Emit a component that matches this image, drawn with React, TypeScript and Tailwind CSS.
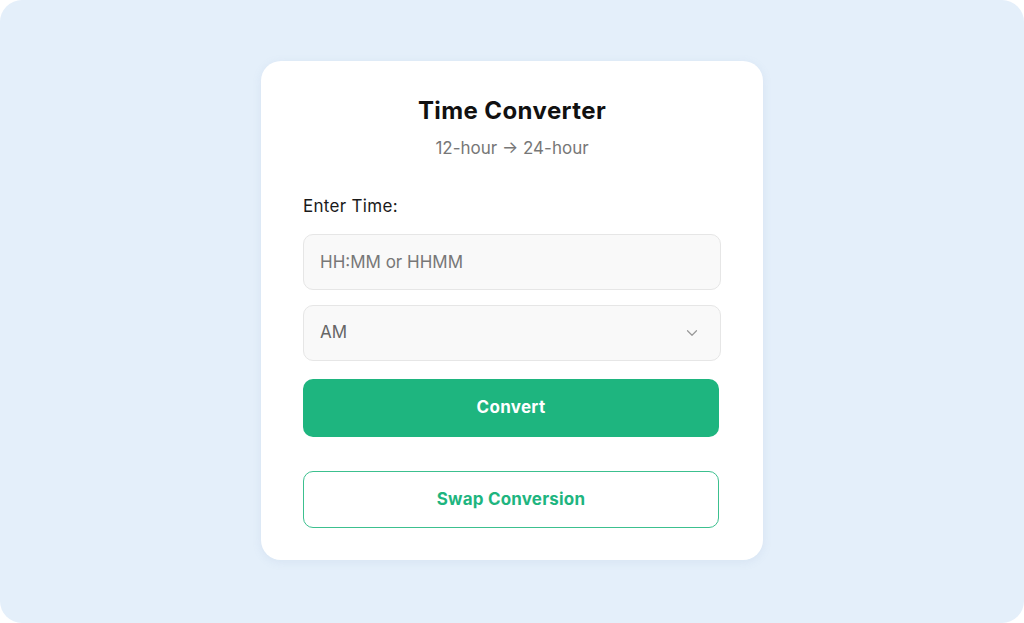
import { ChevronDown } from 'lucide-react';

export default function App() {
  return (
    <div className="w-[1024px] h-[623px] bg-white">
      <div className="w-full h-full rounded-[22px] bg-[#e4effa] flex items-start justify-center pt-[61px] font-['Inter',sans-serif]">
        <div className="w-[502px] h-[499px] bg-white rounded-[20px] shadow-[0_2px_10px_rgba(120,150,190,0.12)] px-[42px] pt-[34px]">
          {/* Header */}
          <div className="text-center">
            <h1 className="text-[24px] font-bold text-[#111] leading-[32px] tracking-[0.4px]">Time Converter</h1>
            <p className="mt-[9px] text-[17px] text-[#777] leading-[24px]">12-hour → 24-hour</p>
          </div>

          <label className="block mt-[35px] text-[17px] text-[#1a1a1a] leading-[22px] tracking-[0.3px]">Enter Time:</label>

          <input
            type="text"
            placeholder="HH:MM or HHMM"
            className="mt-[17px] w-[418px] h-[56px] rounded-[10px] border border-[#e6e6e6] bg-[#f9f9f9] px-[16px] text-[17px] placeholder:text-[#777] outline-none"
          />

          <div className="relative mt-[15px] w-[418px] h-[56px] rounded-[10px] border border-[#e6e6e6] bg-[#f9f9f9] px-[16px] flex items-center justify-between">
            <span className="text-[17px] text-[#666]">AM</span>
            <ChevronDown className="w-[18px] h-[18px] text-[#999] mr-[3px]" strokeWidth={1.6} />
          </div>

          <button className="mt-[18px] w-[416px] h-[58px] rounded-[10px] bg-[#1eb57f] text-white text-[17px] font-bold tracking-[0.3px]">
            Convert
          </button>

          <button className="mt-[34px] w-[416px] h-[57px] rounded-[10px] border-[1.5px] border-[#3cc08f] bg-white text-[#1eb57f] text-[17px] font-bold tracking-[0.2px]">
            Swap Conversion
          </button>
        </div>
      </div>
    </div>
  );
}
